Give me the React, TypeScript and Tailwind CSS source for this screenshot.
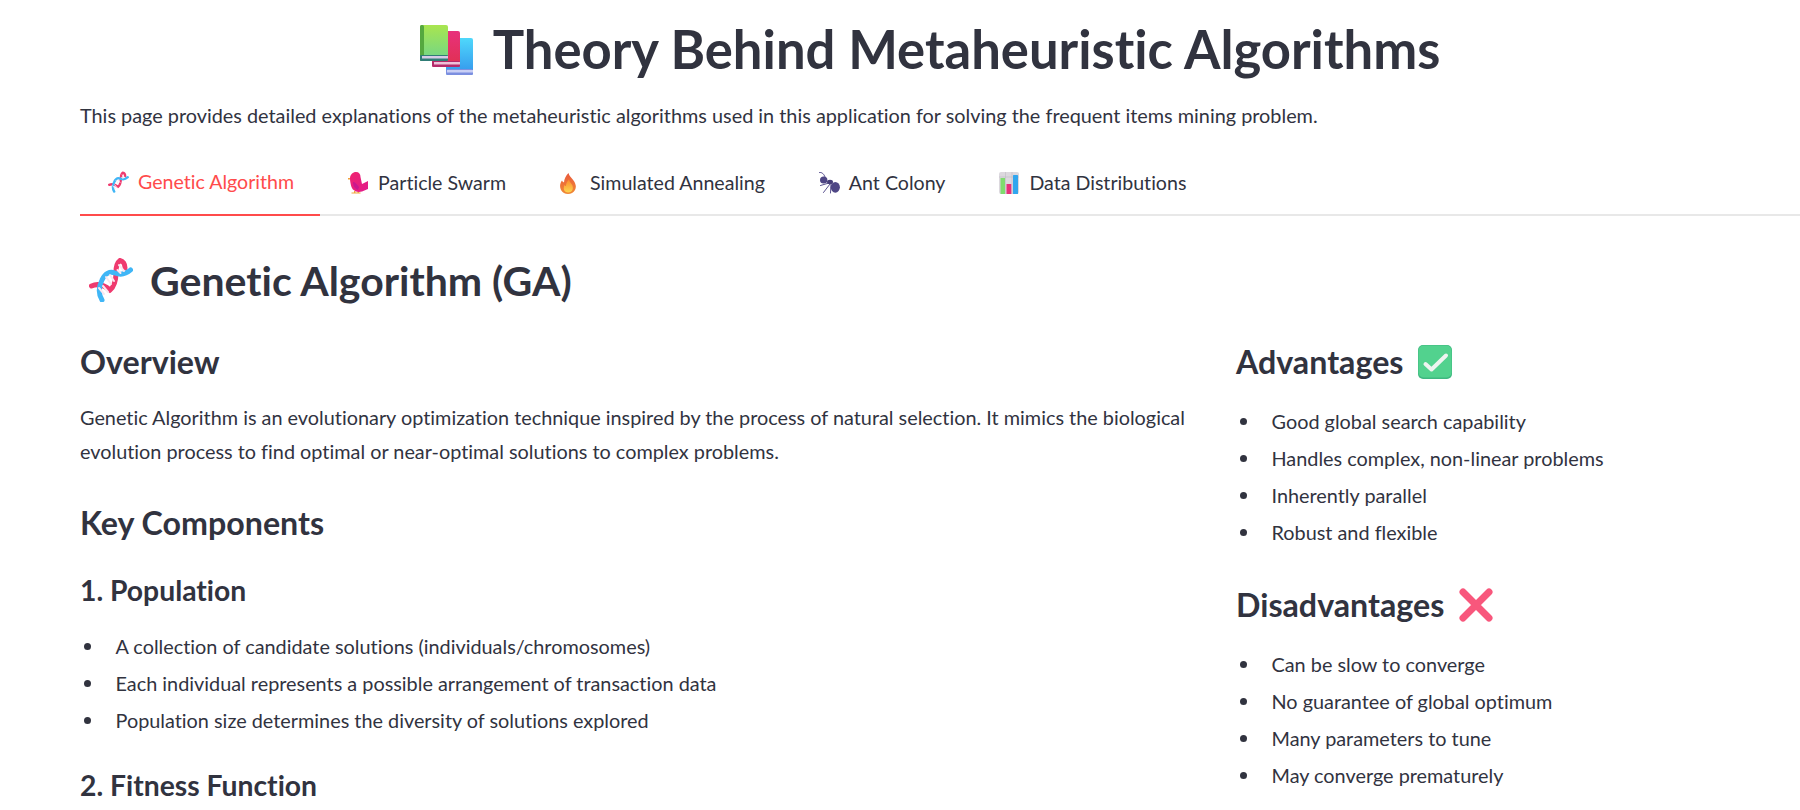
import {JSX, ReactNode} from "react";

const Books = ({className}: {className: string}): JSX.Element => (
    <svg viewBox="0 0 53 50" className={className}>
        <defs>
            <linearGradient id="bk1" x1="0" y1="0" x2="0" y2="1"><stop offset="0" stopColor="#a9e54f"/><stop offset="1" stopColor="#6fd58a"/></linearGradient>
            <linearGradient id="bk2" x1="0" y1="0" x2="0" y2="1"><stop offset="0" stopColor="#e8317c"/><stop offset="1" stopColor="#e0304f"/></linearGradient>
            <linearGradient id="bk3" x1="0" y1="0" x2="0" y2="1"><stop offset="0" stopColor="#4fd8fb"/><stop offset="1" stopColor="#3394ec"/></linearGradient>
        </defs>
        <rect x="26" y="13" width="27" height="37" rx="2" fill="url(#bk3)"/>
        <rect x="26" y="44" width="27" height="6" rx="1.5" fill="#7c8fe0"/>
        <rect x="27" y="45" width="26" height="2.5" fill="#c9cff5"/>
        <rect x="12" y="6" width="28" height="36" rx="2" fill="url(#bk2)"/>
        <rect x="12" y="36" width="28" height="6" rx="1.5" fill="#b52a6b"/>
        <rect x="14" y="37" width="26" height="2.5" fill="#eec0d8"/>
        <rect x="0" y="0" width="28" height="36" rx="2" fill="url(#bk1)"/>
        <rect x="0" y="0" width="4" height="36" rx="1.5" fill="#55a83f"/>
        <rect x="0" y="30" width="28" height="6" rx="1" fill="#2f7c76"/>
        <rect x="2" y="31" width="26" height="2.5" fill="#d5cbe6"/>
    </svg>
);

const Dna = ({className}: {className: string}): JSX.Element => (
    <svg viewBox="0 0 44 44" className={className} fill="none" strokeLinecap="round">
        <path d="M2.500 28C9 25 15 27 21 32C26 28 27 21 27 14C27 8 29 4 31 2.500C34 3 36 6 36 10" stroke="#ef3a6e" strokeWidth="5"/>
        <path d="M13 42C10 37 9 30 13 22C16 15 21 13 26 15C31 17 37 16 41.500 12" stroke="#40b6f6" strokeWidth="5"/>
        <path d="M10 30l5 6M14 28l5 6M17 19l5 7M21 17l4 6M30 7l5 6M28.500 12l3 3" stroke="#fbe6ef" strokeWidth="2"/>
    </svg>
);

const Bird = ({className}: {className: string}): JSX.Element => (
    <svg viewBox="0 0 20 22" className={className}>
        <defs>
            <linearGradient id="brd" x1="0" y1="0" x2="1" y2="1"><stop offset="0" stopColor="#f0246f"/><stop offset="1" stopColor="#e11c8c"/></linearGradient>
        </defs>
        <path d="M0 6h3v1.5H0z" fill="#f2a13a"/>
        <path d="M6 19h1.4v2H6zM9.500 19h1.400v2H9.500zM3.500 20.500h9v1h-9z" fill="#f0a63f"/>
        <path d="M2 6.500C2 2.500 5 0 8 0c3 0 4.500 2 4.500 5L14 12l6-3v8l-6 2.500C8 21 4 18 3 13.500 2.500 11 2 9 2 6.500z" fill="url(#brd)"/>
        <path d="M5 10c2 0 4 2 6 5l-1 3c-3-1-5-4-5-8z" fill="#c9188f"/>
    </svg>
);

const Flame = ({className}: {className: string}): JSX.Element => (
    <svg viewBox="0 0 16 21" className={className}>
        <defs>
            <linearGradient id="flm" x1="0" y1="0" x2="0" y2="1"><stop offset="0" stopColor="#ea5a3c"/><stop offset="1" stopColor="#f08a35"/></linearGradient>
            <linearGradient id="flm2" x1="0" y1="0" x2="0" y2="1"><stop offset="0" stopColor="#fb8a2e"/><stop offset="1" stopColor="#fcd650"/></linearGradient>
        </defs>
        <path d="M8.500 0c.5 3 3 4.500 5 7.500 2.500 3.500 3 6.500 1.500 9.500-1.500 2.800-4 4-7 4s-5.500-1.200-7-4C-.5 14-.2 10.500 2 7.500c.5 1 1 1.500 2 2C4 6 6 2.500 8.500 0z" fill="url(#flm)"/>
        <path d="M9 6.500c.5 2.500 2.200 3.500 3.200 5.500 1.500 3 .5 7.500-4 7.500S3 15.500 4.500 12c.5.8 1 1 1.500 1 0-2.500 1-4.500 3-6.500z" fill="url(#flm2)"/>
    </svg>
);

const Ant = ({className}: {className: string}): JSX.Element => (
    <svg viewBox="0 0 21 22" className={className} fill="none">
        <path d="M.5.500C3 0 5 2 6 5M10 11L1.500 13.500M11 12L4.500 20.500M12 12l-.5 9" stroke="#5b5390" strokeWidth="1" strokeLinecap="round"/>
        <ellipse cx="4.700" cy="8" rx="3.700" ry="3.500" fill="#4f4785"/>
        <ellipse cx="11" cy="10" rx="3" ry="2.200" fill="#463e78"/>
        <ellipse cx="16.300" cy="15.300" rx="4.600" ry="5.400" fill="#4f4785"/>
    </svg>
);

const Chart = ({className}: {className: string}): JSX.Element => (
    <svg viewBox="0 0 20 22" className={className}>
        <rect x="0" y="0" width="20" height="22" rx="2" fill="#dcd8de"/>
        <path d="M6.500 0v22M13 0v22M0 5h20" stroke="#bfbcc4" strokeWidth=".6"/>
        <rect x="1.500" y="6" width="4.500" height="16" fill="#7fdc6e"/>
        <rect x="7.500" y="12" width="4.800" height="10" fill="#e8307a"/>
        <rect x="14" y="3" width="5" height="19" rx=".5" fill="#31a6ee"/>
    </svg>
);

const Check = ({className}: {className: string}): JSX.Element => (
    <svg viewBox="0 0 34 34" className={className}>
        <rect x="0" y="0" width="34" height="34" rx="5" fill="#3fb880"/>
        <rect x="0.5" y="0.5" width="33" height="32" rx="5" fill="#52d28e"/>
        <path d="M7.500 19l6 5.500L28 10.500" fill="none" stroke="#eef4f0" strokeWidth="4" strokeLinecap="round" strokeLinejoin="round"/>
    </svg>
);

const Cross = ({className}: {className: string}): JSX.Element => (
    <svg viewBox="0 0 34 34" className={className}>
        <path d="M4 4l26 26M30 4L4 30" fill="none" stroke="#f8577c" strokeWidth="7" strokeLinecap="round"/>
    </svg>
);

const tabs: {icon: ReactNode; label: string}[] = [
    {icon: <Dna className="w-[21px] h-[22px]"/>, label: "Genetic Algorithm"},
    {icon: <Bird className="w-[20px] h-[22px]"/>, label: "Particle Swarm"},
    {icon: <Flame className="w-[16px] h-[21px]"/>, label: "Simulated Annealing"},
    {icon: <Ant className="w-[21px] h-[22px]"/>, label: "Ant Colony"},
    {icon: <Chart className="w-[20px] h-[22px]"/>, label: "Data Distributions"},
];

function BulletList({items, className}: {items: string[]; className: string}): JSX.Element {
    return (
        <ul className={`flex flex-col ${className}`}>
            {items.map((item) => (
                <li key={item} className="flex items-center h-[37px] text-[19.85px]">
                    <span className="w-[7px] h-[7px] rounded-full bg-[#31333f] ml-[4px] mr-[24.5px] shrink-0"/>
                    {item}
                </li>
            ))}
        </ul>
    );
}

export default function App(): JSX.Element {
    return (
        <div className="w-[1800px] h-[810px] overflow-hidden bg-white text-[#31333f] font-['Lato','Noto_Sans',sans-serif] [font-variant-ligatures:none]">
            <div className="pl-[80px]">
                <div className="flex items-center justify-center gap-[20px] h-[99px] pr-[20px]">
                    <Books className="w-[53px] h-[50px]"/>
                    <h1 className="text-[52.6px] font-bold leading-none">Theory Behind Metaheuristic Algorithms</h1>
                </div>
                <p className="text-[19.85px] leading-[32px]">This page provides detailed explanations of the metaheuristic algorithms used in this application for solving the frequent items mining problem.</p>
                <div className="flex mt-[19px] h-[66px] border-b-2 border-[#e8e8e8]">
                    {tabs.map((tab, i) => (
                        <div key={tab.label} className={`flex items-center px-[26px] h-[66px] text-[19.6px] ${i === 0 ? "border-b-2 border-[#ff4b4b] text-[#ff4b4b]" : ""}`}>
                            <span className="flex w-[32px] pl-[2px] shrink-0">{tab.icon}</span>
                            <span>{tab.label}</span>
                        </div>
                    ))}
                </div>
                <div className="flex items-center gap-[17px] h-[68px] mt-[30px]">
                    <Dna className="w-[44px] h-[44px] ml-[9px]"/>
                    <h2 className="text-[41px] font-bold leading-none">Genetic Algorithm (GA)</h2>
                </div>
                <div className="flex mt-[26px]">
                    <div className="w-[1156px] shrink-0">
                        <h3 className="text-[32.2px] font-bold leading-[44px]">Overview</h3>
                        <p className="text-[19.85px] leading-[34px] mt-[16px] w-[1120px]">Genetic Algorithm is an evolutionary optimization technique inspired by the process of natural selection. It mimics the biological evolution process to find optimal or near-optimal solutions to complex problems.</p>
                        <h3 className="text-[32.2px] font-bold leading-[44px] mt-[33px]">Key Components</h3>
                        <h4 className="text-[28.3px] font-bold leading-[38px] mt-[26px]">1. Population</h4>
                        <BulletList className="mt-[19px]" items={["A collection of candidate solutions (individuals/chromosomes)", "Each individual represents a possible arrangement of transaction data", "Population size determines the diversity of solutions explored"]}/>
                        <h4 className="text-[28.3px] font-bold leading-[38px] mt-[27px]">2. Fitness Function</h4>
                    </div>
                    <div className="flex-1">
                        <h3 className="flex items-center gap-[14px] text-[32.2px] font-bold leading-[44px]">Advantages <Check className="w-[34px] h-[34px]"/></h3>
                        <BulletList className="mt-[19px]" items={["Good global search capability", "Handles complex, non-linear problems", "Inherently parallel", "Robust and flexible"]}/>
                        <h3 className="flex items-center gap-[15px] text-[32.2px] font-bold leading-[44px] mt-[32px]">Disadvantages <Cross className="w-[34px] h-[34px]"/></h3>
                        <BulletList className="mt-[19px]" items={["Can be slow to converge", "No guarantee of global optimum", "Many parameters to tune", "May converge prematurely"]}/>
                    </div>
                </div>
            </div>
        </div>
    );
}
